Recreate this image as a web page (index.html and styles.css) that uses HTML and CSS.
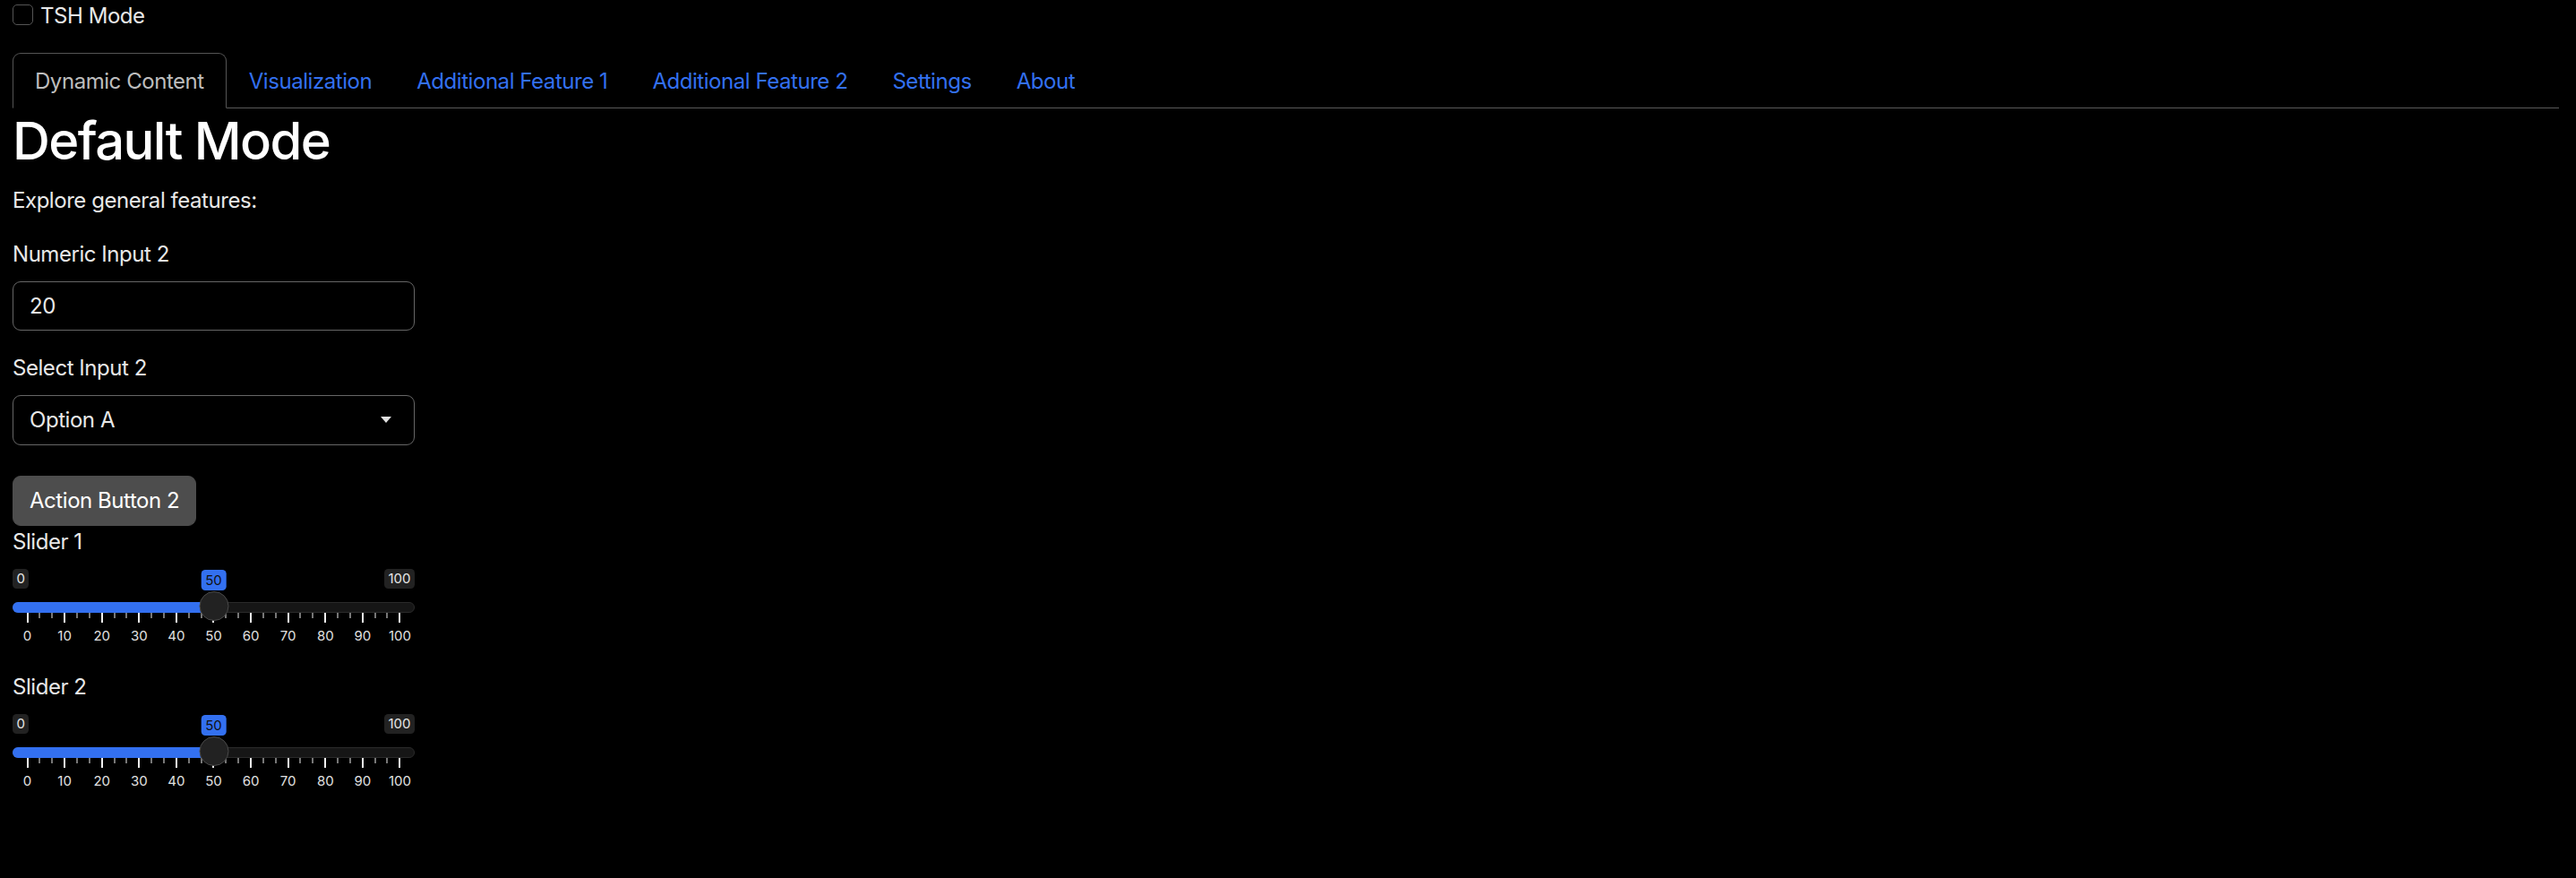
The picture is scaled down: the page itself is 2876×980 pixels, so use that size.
FILE: index.html
```html
<!DOCTYPE html>
<html lang="en">
<head>
<meta charset="utf-8">
<title>TSH App</title>
<link rel="stylesheet" href="styles.css">
</head>
<body>
<div class="container">
  <div class="checkbox-row">
    <label class="check-label"><span class="check-box"></span><span>TSH Mode</span></label>
  </div>

  <ul class="nav-tabs">
    <li class="nav-item"><a class="nav-link active">Dynamic Content</a></li>
    <li class="nav-item"><a class="nav-link">Visualization</a></li>
    <li class="nav-item"><a class="nav-link">Additional Feature 1</a></li>
    <li class="nav-item"><a class="nav-link">Additional Feature 2</a></li>
    <li class="nav-item"><a class="nav-link">Settings</a></li>
    <li class="nav-item"><a class="nav-link">About</a></li>
  </ul>

  <div class="tab-pane">
    <h1 class="title">Default Mode</h1>
    <p class="lead-text">Explore general features:</p>

    <div class="form-group">
      <label class="control-label">Numeric Input 2</label>
      <div class="form-control">20</div>
    </div>

    <div class="form-group select-group">
      <label class="control-label">Select Input 2</label>
      <div class="form-control select-control"><span>Option A</span><span class="caret"></span></div>
    </div>

    <button class="btn">Action Button 2</button>

    <div class="form-group slider-group">
      <label class="control-label slider-label">Slider 1</label>
      <div class="irs" style="--p: 0.5">
        <div class="irs-top">
          <span class="irs-minmax">0</span>
          <span class="irs-minmax">100</span>
          <span class="irs-single">50</span>
        </div>
        <div class="irs-line">
          <div class="irs-bar"></div>
          <div class="irs-handle"></div>
        </div>
        <div class="irs-ticks">
          <i class="tk major"></i><i class="tk"></i><i class="tk"></i><i class="tk major"></i><i class="tk"></i><i class="tk"></i><i class="tk major"></i><i class="tk"></i><i class="tk"></i><i class="tk major"></i><i class="tk"></i><i class="tk"></i><i class="tk major"></i><i class="tk"></i><i class="tk"></i><i class="tk major"></i><i class="tk"></i><i class="tk"></i><i class="tk major"></i><i class="tk"></i><i class="tk"></i><i class="tk major"></i><i class="tk"></i><i class="tk"></i><i class="tk major"></i><i class="tk"></i><i class="tk"></i><i class="tk major"></i><i class="tk"></i><i class="tk"></i><i class="tk major"></i>
        </div>
        <div class="irs-grid-text">
          <span>0</span><span>10</span><span>20</span><span>30</span><span>40</span><span>50</span><span>60</span><span>70</span><span>80</span><span>90</span><span>100</span>
        </div>
      </div>
    </div>

    <div class="form-group slider-group">
      <label class="control-label slider-label">Slider 2</label>
      <div class="irs" style="--p: 0.5">
        <div class="irs-top">
          <span class="irs-minmax">0</span>
          <span class="irs-minmax">100</span>
          <span class="irs-single">50</span>
        </div>
        <div class="irs-line">
          <div class="irs-bar"></div>
          <div class="irs-handle"></div>
        </div>
        <div class="irs-ticks">
          <i class="tk major"></i><i class="tk"></i><i class="tk"></i><i class="tk major"></i><i class="tk"></i><i class="tk"></i><i class="tk major"></i><i class="tk"></i><i class="tk"></i><i class="tk major"></i><i class="tk"></i><i class="tk"></i><i class="tk major"></i><i class="tk"></i><i class="tk"></i><i class="tk major"></i><i class="tk"></i><i class="tk"></i><i class="tk major"></i><i class="tk"></i><i class="tk"></i><i class="tk major"></i><i class="tk"></i><i class="tk"></i><i class="tk major"></i><i class="tk"></i><i class="tk"></i><i class="tk major"></i><i class="tk"></i><i class="tk"></i><i class="tk major"></i>
        </div>
        <div class="irs-grid-text">
          <span>0</span><span>10</span><span>20</span><span>30</span><span>40</span><span>50</span><span>60</span><span>70</span><span>80</span><span>90</span><span>100</span>
        </div>
      </div>
    </div>
  </div>
</div>
</body>
</html>
```

FILE: styles.css
```css
html, body {
  margin: 0;
  padding: 0;
  background: #000;
}

body {
  font-family: Inter, "Noto Sans", "Liberation Sans", sans-serif;
  font-size: 24px;
  line-height: 36px;
  letter-spacing: -0.45px;
  color: #e8e8e8;
}

.container {
  padding: 0 19px 0 14px;
}

/* checkbox */
.checkbox-row {
  margin-bottom: 23px;
}

.check-label {
  display: flex;
  align-items: flex-start;
  gap: 8px;
}

.check-box {
  width: 21px;
  height: 21px;
  margin-top: 5px;
  border: 1px solid #555;
  border-radius: 5px;
  background: #000;
}

/* tabs */
.nav-tabs {
  display: flex;
  list-style: none;
  margin: 0;
  padding: 0;
  border-bottom: 1px solid #5a5a5a;
}

.nav-item {
  margin-bottom: -1px;
}

.nav-link {
  display: block;
  padding: 13px 24px 11px;
  border: 1px solid transparent;
  border-top-left-radius: 9px;
  border-top-right-radius: 9px;
  color: #3370f0;
}

.nav-link.active {
  color: #bdbdbd;
  background: #000;
  border-color: #555 #555 #000;
}

/* content */
.title {
  margin: 0 0 12px;
  font-size: 58px;
  line-height: 72px;
  font-weight: 500;
  letter-spacing: -1.6px;
  color: #fff;
}

.lead-text {
  margin: 0 0 24px;
  padding-top: 1px;
}

.form-group {
  width: 449px;
  margin-bottom: 24px;
}

.control-label {
  display: block;
  margin-bottom: 12px;
}

.form-control {
  box-sizing: border-box;
  height: 55px;
  padding: 0 18px;
  border: 1px solid #666;
  border-radius: 9px;
  display: flex;
  align-items: center;
  color: #e8e8e8;
}

.select-group {
  margin-bottom: 34px;
}

.select-control {
  height: 56px;
  justify-content: space-between;
  padding-right: 25px;
}

.caret {
  width: 0;
  height: 0;
  border-left: 6px solid transparent;
  border-right: 6px solid transparent;
  border-top: 7px solid #e0e0e0;
  margin-top: -2px;
}

.btn {
  display: block;
  height: 56px;
  padding: 0 18px;
  border: 1px solid #4d4d4d;
  border-radius: 9px;
  background: #4d4d4d;
  color: #fff;
  font-family: inherit;
  font-size: 24px;
  line-height: 36px;
  letter-spacing: -0.45px;
}

/* sliders */
.slider-group {
  margin-bottom: 30px;
}

.slider-label {
  margin-bottom: 12px;
}

.irs {
  position: relative;
  letter-spacing: 0;
}

.irs-top {
  display: flex;
  justify-content: space-between;
  height: 23px;
}

.irs-minmax,
.irs-single {
  display: block;
  height: 22px;
  padding: 0 4.5px;
  font-size: 15px;
  line-height: 22px;
  border-radius: 4.5px;
  background: #222;
  color: #e6e6e6;
}

.irs-single {
  position: absolute;
  top: 1px;
  height: 23px;
  line-height: 23px;
  padding: 0 5px;
  left: calc(16.5px + (100% - 33px) * var(--p));
  transform: translateX(-50%);
  background: #3370f0;
  color: #111;
}

.irs-line {
  position: relative;
  height: 12px;
  margin-top: 14px;
  box-sizing: border-box;
  border: 1px solid #2a2a2a;
  border-radius: 6px;
  background: #161616;
}

.irs-bar {
  position: absolute;
  left: -1px;
  top: -1px;
  bottom: -1px;
  width: calc(16.5px + (100% - 33px) * var(--p));
  background: #3370f0;
  border-radius: 6px 0 0 6px;
}

.irs-handle {
  position: absolute;
  top: -13px;
  left: calc(16.5px + (100% - 33px) * var(--p));
  width: 33px;
  height: 33px;
  box-sizing: border-box;
  transform: translateX(-50%);
  border-radius: 50%;
  border: 1.5px solid #4a4a4a;
  background: #222;
  z-index: 2;
}

.irs-ticks {
  display: flex;
  justify-content: space-between;
  height: 11px;
  padding: 0 16.5px;
}

.tk {
  position: relative;
  width: 0;
}

.tk::before {
  content: "";
  position: absolute;
  top: 0;
  left: -1px;
  width: 2px;
  height: 6px;
  background: #777;
}

.tk.major::before {
  height: 11px;
  background: #f0f0f0;
}

.irs-grid-text {
  display: flex;
  justify-content: space-between;
  margin-top: 6px;
  padding: 0 16.5px;
  font-size: 15px;
  line-height: 18px;
  color: #e0e0e0;
}

.irs-grid-text span {
  width: 0;
  display: flex;
  justify-content: center;
  white-space: nowrap;
}
```
